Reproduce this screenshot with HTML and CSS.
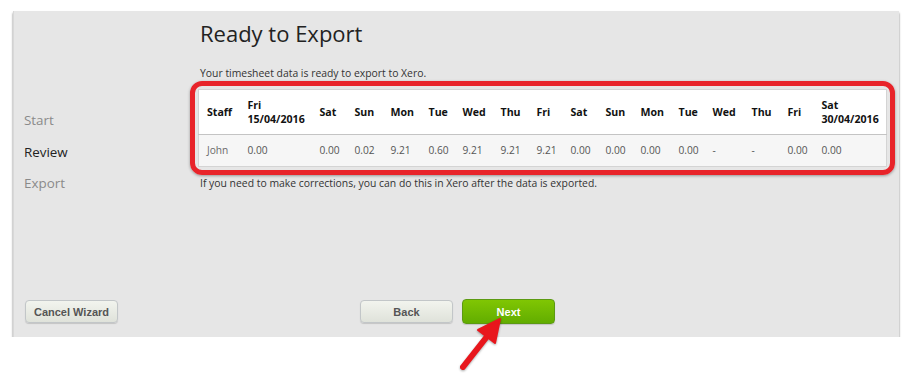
FILE: index.html
```html
<!DOCTYPE html>
<html lang="en">
<head>
    <meta charset="UTF-8">
    <title>Ready to Export</title>
    <link rel="stylesheet" href="styles.css">
</head>
<body>
    <div class="wizard">
        <div class="wizard-body">
            <ul class="steps">
                <li>Start</li>
                <li class="current">Review</li>
                <li>Export</li>
            </ul>

            <div class="main">
                <h1 class="page-title">Ready to Export</h1>
                <p class="note">Your timesheet data is ready to export to Xero.</p>

                <div class="highlight">
                    <table class="sheet">
                        <thead>
                            <tr>
                                <th>Staff</th>
                                <th>Fri<br>15/04/2016</th>
                                <th>Sat</th>
                                <th>Sun</th>
                                <th>Mon</th>
                                <th>Tue</th>
                                <th>Wed</th>
                                <th>Thu</th>
                                <th>Fri</th>
                                <th>Sat</th>
                                <th>Sun</th>
                                <th>Mon</th>
                                <th>Tue</th>
                                <th>Wed</th>
                                <th>Thu</th>
                                <th>Fri</th>
                                <th>Sat<br>30/04/2016</th>
                            </tr>
                        </thead>
                        <tbody>
                            <tr>
                                <td class="name">John</td>
                                <td>0.00</td>
                                <td>0.00</td>
                                <td>0.02</td>
                                <td>9.21</td>
                                <td>0.60</td>
                                <td>9.21</td>
                                <td>9.21</td>
                                <td>9.21</td>
                                <td>0.00</td>
                                <td>0.00</td>
                                <td>0.00</td>
                                <td>0.00</td>
                                <td>-</td>
                                <td>-</td>
                                <td>0.00</td>
                                <td>0.00</td>
                            </tr>
                        </tbody>
                    </table>
                </div>

                <p class="note after">If you need to make corrections, you can do this in Xero after the data is exported.</p>
            </div>
        </div>

        <div class="wizard-footer">
            <button class="btn">Cancel Wizard</button>
            <div class="nav-buttons">
                <button class="btn">Back</button>
                <button class="btn btn-next">Next</button>
            </div>
        </div>
    </div>

    <!-- annotation arrow pointing at Next -->
    <svg class="pointer" width="913" height="379" viewBox="0 0 913 379">
        <line x1="463" y1="367" x2="489" y2="334" stroke="#e8161c" stroke-width="6" stroke-linecap="round"/>
        <polygon points="500,319 495,343 478,330" fill="#e8161c" stroke="#e8161c" stroke-width="2" stroke-linejoin="round"/>
    </svg>
</body>
</html>
```

FILE: styles.css
```css
:root {
    --panel-bg: #e6e6e6;
    --text-color: #333333;
    --muted: #8a8a8a;
    --mark-red: #e8242a;
}

* {
    margin: 0;
    padding: 0;
    box-sizing: border-box;
}

body {
    font-family: "Open Sans", "Liberation Sans", sans-serif;
    background: #ffffff;
    color: var(--text-color);
    -webkit-font-smoothing: antialiased;
}

.wizard {
    margin: 11px 0 0 13px;
    width: 886px;
    height: 326px;
    background: var(--panel-bg);
    border-left: 1px solid #d8d8d8;
    box-shadow: 0 2px 2px rgba(0, 0, 0, 0.55);
    display: flex;
    flex-direction: column;
}

.wizard-body {
    display: flex;
    flex: 1;
}

.steps {
    list-style: none;
    width: 186px;
    padding: 99px 0 0 10px;
}

.steps li {
    font-size: 13.4px;
    line-height: 20px;
    color: var(--muted);
    margin-bottom: 11.5px;
}

.steps li.current {
    color: #222222;
}

.main {
    width: 685px;
}

.page-title {
    font-size: 22px;
    font-weight: 400;
    line-height: 30px;
    color: #222222;
    margin-top: 7px;
}

.note {
    font-size: 10.4px;
    line-height: 16px;
    color: var(--text-color);
    margin-top: 17px;
}

.note.after {
    margin-top: 0;
}

.highlight {
    margin: 0 -10px 0 -10px;
    border: 5px solid var(--mark-red);
    border-radius: 12px;
    padding: 3px;
    box-shadow: 0 1px 3px rgba(0, 0, 0, 0.35);
}

.sheet {
    width: 100%;
    table-layout: fixed;
    border-collapse: collapse;
    border: 1px solid #d4d4d4;
    line-height: 14px;
}

/* column widths follow the day labels */
.sheet th:nth-child(1) { width: 41px; }
.sheet th:nth-child(2) { width: 72px; }
.sheet th:nth-child(3) { width: 35px; }
.sheet th:nth-child(4) { width: 36px; }
.sheet th:nth-child(5) { width: 38px; }
.sheet th:nth-child(6) { width: 34px; }
.sheet th:nth-child(7) { width: 38px; }
.sheet th:nth-child(8) { width: 36px; }
.sheet th:nth-child(9) { width: 34px; }
.sheet th:nth-child(10) { width: 35px; }
.sheet th:nth-child(11) { width: 35px; }
.sheet th:nth-child(12) { width: 38px; }
.sheet th:nth-child(13) { width: 34px; }
.sheet th:nth-child(14) { width: 39px; }
.sheet th:nth-child(15) { width: 36px; }
.sheet th:nth-child(16) { width: 34px; }

.sheet th {
    background: #ffffff;
    color: #111111;
    font-size: 10.6px;
    font-weight: 700;
    text-align: left;
    vertical-align: middle;
    white-space: nowrap;
    padding: 8px 0 8px 8px;
    border-bottom: 1px solid #c4c4c4;
}

.sheet td {
    background: #f6f6f6;
    color: #555555;
    font-size: 10.2px;
    white-space: nowrap;
    padding: 8px 0 9px 8px;
}

.sheet td.name {
    color: #6a6a6a;
}

.wizard-footer {
    display: flex;
    align-items: center;
    padding: 0 0 13px 11px;
}

.nav-buttons {
    display: flex;
    align-items: center;
    gap: 9px;
    margin-left: 242px;
}

.btn {
    font-family: "Liberation Sans", Arial, sans-serif;
    font-size: 11px;
    font-weight: 700;
    color: #555555;
    width: 93px;
    height: 23px;
    border: 1px solid #c2c6c8;
    border-radius: 4px;
    background: linear-gradient(#f2f4ee, #dfe2da);
    box-shadow: 0 1px 1px rgba(0, 0, 0, 0.15);
}

.btn-next {
    height: 25px;
    color: #ffffff;
    border-color: #5c9a12;
    background: linear-gradient(#80c603, #62ad00);
}

.pointer {
    position: absolute;
    left: 0;
    top: 0;
    pointer-events: none;
    filter: drop-shadow(0 1px 1px rgba(0, 0, 0, 0.35));
}
```
